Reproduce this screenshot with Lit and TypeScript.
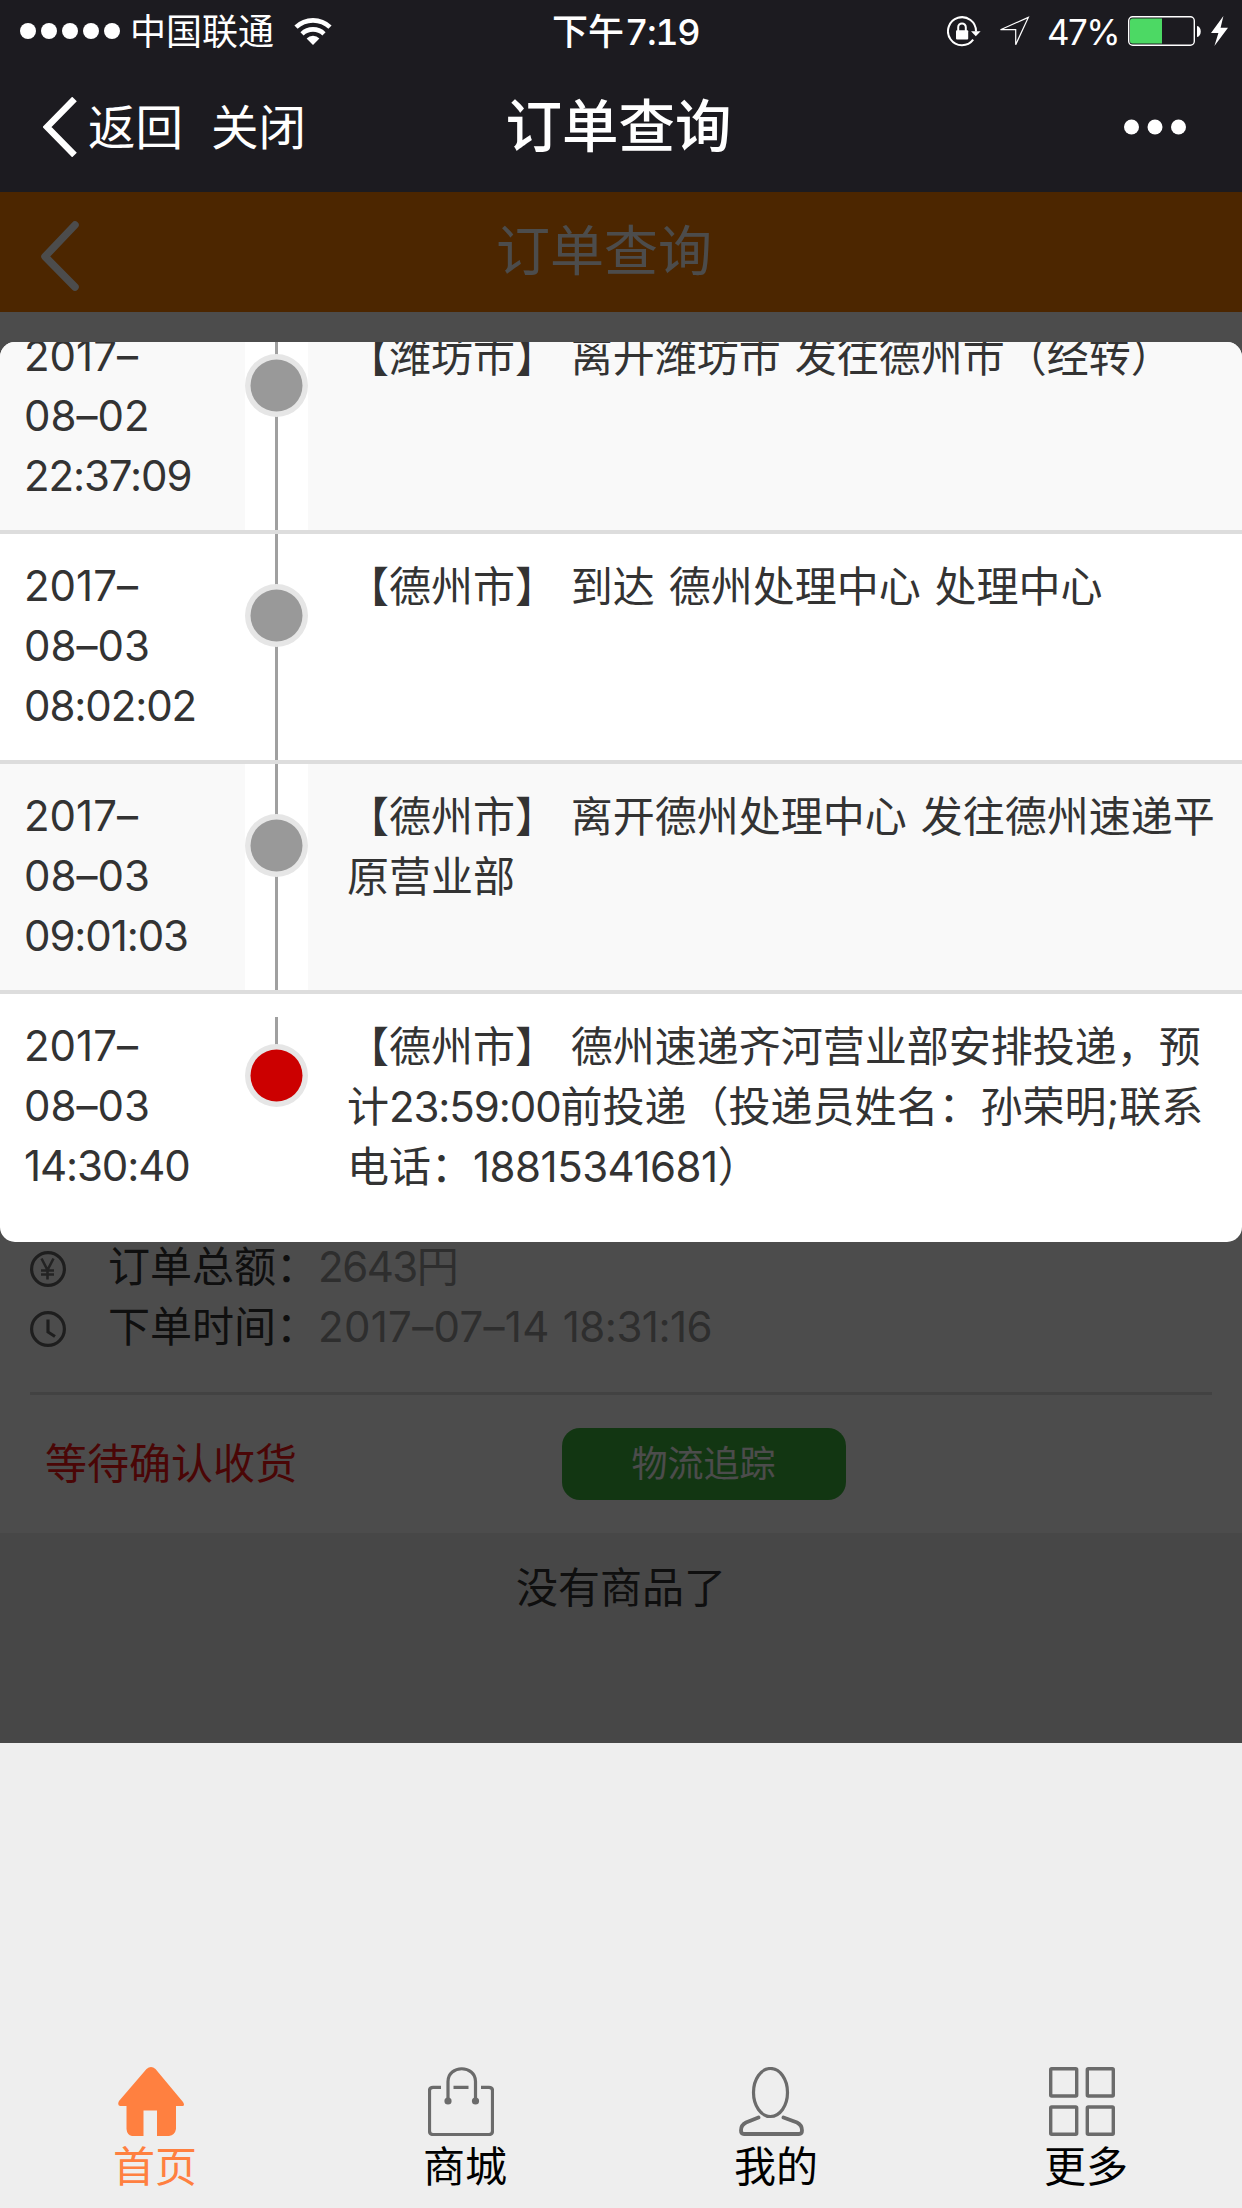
import { LitElement, html, svg, css } from "lit";
import { customElement, property } from "lit/decorators.js";
import { classMap } from "lit/directives/class-map.js";

interface TrackEvent {
  day: string[];
  lines: string[];
}

const EVENTS: TrackEvent[] = [
  { day: ["2017–", "08–02", "22:37:09"], lines: ["【潍坊市】 离开潍坊市 发往德州市（经转）"] },
  { day: ["2017–", "08–03", "08:02:02"], lines: ["【德州市】 到达 德州处理中心 处理中心"] },
  { day: ["2017–", "08–03", "09:01:03"], lines: ["【德州市】 离开德州处理中心 发往德州速递平", "原营业部"] },
  {
    day: ["2017–", "08–03", "14:30:40"],
    lines: ["【德州市】 德州速递齐河营业部安排投递，预", "计23:59:00前投递（投递员姓名：孙荣明;联系", "电话：18815341681）"],
  },
];

@customElement("status-bar")
export class StatusBar extends LitElement {
  static styles = css`
    :host { display: grid; grid-template-columns: 552px 1fr auto; height: 60px; align-items: center; color: #fff; font-size: 36px; line-height: 60px; white-space: nowrap; }
    .left, .right { display: flex; align-items: center; }
    .left { padding-left: 20px; }
    .dots { width: 100px; height: 16px; display: block; }
    .carrier { margin-left: 10px; padding-top: 2px; }
    .wifi { display: block; margin-left: 20px; }
    .time { font-weight: 500; padding-top: 1px; }
    .digits { font-variant-numeric: tabular-nums; margin-left: 1px; letter-spacing: -1.4px; }
    .right { padding-right: 14px; }
    .pct { margin-left: 17px; width: 81px; font-size: 35px; letter-spacing: -1.6px; padding-top: 1px; }
    svg { display: block; flex: none; }
    .arrow { margin-left: 18px; }
    .bolt { margin-left: 9px; }
  `;
  render() {
    return html`
      <div class="left">
        <svg class="dots" viewBox="0 0 100 16" fill="#fff">${[8, 29, 50, 71, 92].map((x) => svg`<circle cx=${x} cy="8" r="8"></circle>`)}</svg>
        <span class="carrier">中国联通</span>
        <svg class="wifi" width="38" height="28" viewBox="0 0 38 28" fill="none" stroke="#fff" stroke-width="4.6">
          <path d="M2 10.2a24.5 24.5 0 0 1 34 0"></path>
          <path d="M8 16.8a16 16 0 0 1 22 0"></path>
          <path d="M19 28l-6.4-6.5a9 9 0 0 1 12.8 0z" fill="#fff" stroke="none"></path>
        </svg>
      </div>
      <span class="time">下午<span class="digits">7:19</span></span>
      <div class="right">
        <svg width="34" height="31" viewBox="0 0 34 31" fill="none" stroke="#fff" stroke-width="2">
          <path d="M26.2 23.6A14 14 0 1 1 29 15.5"></path>
          <path d="M24 15.2h9.6l-4.8 5z" fill="#fff" stroke="none"></path>
          <path d="M11.2 15v-3.8a3.8 3.8 0 0 1 7.6 0V15"></path>
          <rect x="9" y="14.2" width="12.2" height="9.2" rx="1" fill="#fff" stroke="none"></rect>
        </svg>
        <svg class="arrow" width="31" height="31" viewBox="0 0 31 31" fill="none" stroke="#fff" stroke-width="1.2">
          <path d="M29.3 1.4L1.5 13.7h15.2v15z"></path>
        </svg>
        <span class="pct">47%</span>
        <svg width="74" height="30" viewBox="0 0 74 30">
          <rect x="0.7" y="0.7" width="65.6" height="28.6" rx="4" fill="none" stroke="#fff" stroke-width="1.4"></rect>
          <path d="M34 2.4v25.2H4.5a2.5 2.5 0 0 1-2.5-2.5V4.9A2.5 2.5 0 0 1 4.5 2.4z" fill="#4cd964"></path>
          <path d="M69 10c5 .6 5 10.4 0 11z" fill="#fff"></path>
        </svg>
        <svg class="bolt" width="17" height="30" viewBox="0 0 17 30" fill="#fff"><path d="M12.4 0L0 17h7.4L3.4 30 17 11.8H9.6z"></path></svg>
      </div>
    `;
  }
}

@customElement("nav-bar")
export class NavBar extends LitElement {
  static styles = css`
    :host { display: grid; grid-template-columns: 1fr auto 1fr; height: 132px; box-sizing: border-box; padding-bottom: 2px; align-items: center; color: #fff; font-size: 47.5px; line-height: 130px; white-space: nowrap; }
    .left { display: flex; align-items: center; padding-left: 43px; gap: 28px; }
    .back { display: flex; align-items: center; gap: 11px; }
    .label { padding-top: 3px; }
    .title { font-size: 56.5px; font-weight: 500; padding-right: 5px; }
    .right { display: flex; justify-content: flex-end; padding-right: 56px; }
    svg { display: block; }
  `;
  render() {
    return html`
      <div class="left">
        <span class="back">
          <svg width="34" height="60" viewBox="0 0 34 60" fill="none" stroke="#fff" stroke-width="6.5"><path d="M31.5 2L4 30l27.5 28"></path></svg>
          <span class="label">返回</span>
        </span>
        <span class="label">关闭</span>
      </div>
      <span class="title">订单查询</span>
      <div class="right">
        <svg width="62" height="16" viewBox="0 0 62 16" fill="#fff">${[7.5, 31, 54.5].map((x) => svg`<circle cx=${x} cy="8" r="7.5"></circle>`)}</svg>
      </div>
    `;
  }
}

@customElement("track-row")
export class TrackRow extends LitElement {
  @property({ attribute: false }) event!: TrackEvent;
  @property({ type: Boolean }) shaded = false;
  @property({ type: Boolean }) latest = false;

  static styles = css`
    :host { display: block; border-bottom: 4px solid #ddd; }
    :host([latest]) { border-bottom: 0; }
    .row { display: grid; grid-template-columns: 245px 63px 1fr; height: 226px; background: #fff; }
    .shaded { background: #f9f9f9; }
    .when { padding: 22px 0 0 24px; }
    .text { padding: 23px 0 0 39px; word-spacing: 2px; }
    .line { display: block; white-space: nowrap; }
    .clock { letter-spacing: -1.1px; }
    .phone { letter-spacing: -0.5px; }
    .rail { background: #fff; }
    svg { display: block; }
  `;

  /* Digit runs are set slightly tighter than the text around them. */
  private tighten(line: string) {
    return line
      .split(/(\d[\d:]{6,})/)
      .map((part) =>
        /^\d[\d:]{6,}$/.test(part)
          ? html`<span class=${part.includes(":") ? "clock" : "phone"}>${part}</span>`
          : part
      );
  }

  render() {
    return html`
      <div class=${classMap({ row: true, shaded: this.shaded })}>
        <div class="when">${this.event.day.map((d) => html`<span class="line">${this.tighten(d)}</span>`)}</div>
        <div class="rail">
          <svg width="63" height="226" viewBox="0 0 63 226">
            <path d=${this.latest ? "M31.5 23V60" : "M31.5 0V226"} stroke="#a0a0a0" stroke-width="3"></path>
            <circle cx="31.5" cy="81.5" r="31.5" fill="#e6e6e6"></circle>
            <circle cx="31.5" cy="81.5" r="26" fill=${this.latest ? "#c00" : "#999"}></circle>
          </svg>
        </div>
        <div class="text">${this.event.lines.map((l) => html`<span class="line">${this.tighten(l)}</span>`)}</div>
      </div>
    `;
  }
}

@customElement("order-page")
export class OrderPage extends LitElement {
  static styles = css`
    :host { display: block; position: relative; height: 1551px; background: #eee; color: #333; overflow: hidden; }
    .header { display: flex; align-items: center; height: 120px; padding-left: 39px; background: #ff8000; color: #fff; font-size: 54px; line-height: 120px; }
    .header svg { margin-top: 8px; }
    .heading { margin-left: 417px; }
    .card { display: flex; flex-direction: column; justify-content: flex-end; height: 1221px; background: #fff; }
    .facts { margin: 0 30px; padding-bottom: 35px; border-bottom: 3px solid #ddd; }
    .fact { display: flex; align-items: center; height: 60px; line-height: 60px; }
    .fact svg { margin-top: 4px; margin-right: 42px; }
    .value { color: #999; letter-spacing: 0.3px; word-spacing: 1px; }
    .clock { letter-spacing: -0.5px; }
    .amount { letter-spacing: -1.5px; }
    .actions { display: flex; align-items: center; height: 138px; padding-left: 45px; }
    .state { width: 517px; color: #f81414; }
    .track { width: 284px; height: 72px; border-radius: 18px; background: #3fb43f; color: #fff; font-size: 36px; line-height: 72px; text-align: center; text-indent: -1px; }
    .empty { height: 210px; padding-top: 25px; text-align: center; line-height: 60px; }
    .mask { position: absolute; inset: 0; background: rgba(0, 0, 0, 0.7); }
    .modal { position: absolute; left: 0; right: 0; top: 150px; height: 900px; border-radius: 15px; background: #fff; overflow: hidden; }
    .list { margin-top: -38px; }
    svg { display: block; flex: none; }
  `;
  render() {
    return html`
      <div class="header">
        <svg width="40" height="70" viewBox="0 0 40 70" fill="none" stroke="#fff" stroke-width="7.5" stroke-linecap="round" stroke-linejoin="round"><path d="M36 4L6 35.5 36 66"></path></svg>
        <span class="heading">订单查询</span>
      </div>
      <div class="card">
        <div class="facts">
          <div class="fact">
            <svg width="36" height="36" viewBox="0 0 36 36" fill="none" stroke="#666" stroke-width="3.2">
              <circle cx="18" cy="18" r="16.4"></circle>
              <path d="M11.5 7.5L17.5 19 23.5 7.5M17.5 19V28.5M11 19.5H24M11 23.5H24" stroke-width="2.6" stroke="#777"></path>
            </svg>
            <span>订单总额：</span><span class="value amount">2643円</span>
          </div>
          <div class="fact">
            <svg width="36" height="36" viewBox="0 0 36 36" fill="none" stroke="#666" stroke-width="3.2">
              <circle cx="18" cy="18" r="16.4"></circle>
              <path d="M18 8.5V21L25 25.5"></path>
            </svg>
            <span>下单时间：</span><span class="value">2017–07–14 <span class="clock">18:31:16</span></span>
          </div>
        </div>
        <div class="actions">
          <span class="state">等待确认收货</span>
          <div class="track">物流追踪</div>
        </div>
      </div>
      <div class="empty">没有商品了</div>
      <div class="mask"></div>
      <div class="modal">
        <div class="list">
          ${EVENTS.map((e, i) => html`<track-row .event=${e} ?shaded=${i % 2 === 0} ?latest=${i === EVENTS.length - 1}></track-row>`)}
        </div>
      </div>
    `;
  }
}

@customElement("tab-bar")
export class TabBar extends LitElement {
  static styles = css`
    :host { display: grid; grid-template-columns: 310px 310px 312px 308px; height: 141px; }
    .tab { display: flex; flex-direction: column; align-items: center; color: #000; line-height: 62px; }
    .active { color: #ff8040; }
    .tab svg { display: block; margin-right: 8px; }
  `;
  private icons = [
    svg`<path fill="#ff8040" stroke="none" d="M28.5 2Q33 -2 37.5 2L65 35Q67 38 65 39H58V62Q57 68 51 69H39V43.5H25.5V69H14Q9 68 8.5 62V39H2Q-1 38 1 34Z"></path>`,
    svg`<path d="M13 20.3H5Q1.5 20.3 1.5 23.5V64Q1.5 67.5 5 67.5H61Q64.5 67.5 64.5 64V23.5Q64.5 20.3 61 20.3H53M25.5 20.3H40.5"></path>
        <path d="M20 34V14.5C20 -2.5 47.5 -2.5 47.5 14.5V34"></path>
        <circle cx="20" cy="34" r="3.6" fill="#6b6b6b" stroke="none"></circle><circle cx="47.5" cy="34" r="3.6" fill="#6b6b6b" stroke="none"></circle>`,
    svg`<ellipse cx="31.5" cy="25.5" rx="17" ry="24"></ellipse>
        <path stroke-width="3.8" stroke-linecap="round" d="M19.5 50.5L7 55.5Q2 58 2 63.5Q2 67 5 67H60Q63 67 63 63.5Q63 58 58 55.5L44.5 50.5"></path>`,
    svg`<g stroke-width="3.4"><rect x="1.7" y="1.7" width="26" height="27.3" rx="1"></rect><rect x="38.3" y="1.7" width="26" height="27.3" rx="1"></rect>
        <rect x="1.7" y="40" width="26" height="27.3" rx="1"></rect><rect x="38.3" y="40" width="26" height="27.3" rx="1"></rect></g>`,
  ];
  render() {
    return html`${["首页", "商城", "我的", "更多"].map(
      (t, i) => html`<div class=${classMap({ tab: true, active: i === 0 })}>
        <svg width="66" height="69" viewBox="0 0 66 69" fill="none" stroke="#6b6b6b" stroke-width="3.2">${this.icons[i]}</svg>
        <span>${t}</span>
      </div>`
    )}`;
  }
}

@customElement("app-root")
export class AppRoot extends LitElement {
  static styles = css`
    :host { display: block; font-family: Inter, "Noto Sans CJK SC", sans-serif; font-size: 42px; font-weight: 380; line-height: 60px; font-feature-settings: "calt" 0; }
    .screen { display: flex; flex-direction: column; width: 1242px; height: 2208px; background: #eee; overflow: hidden; }
    .top { background: #1c1b20; }
    .tabs { margin-top: auto; }
  `;
  render() {
    return html`
      <div class="screen">
        <div class="top"><status-bar></status-bar><nav-bar></nav-bar></div>
        <order-page></order-page>
        <tab-bar class="tabs"></tab-bar>
      </div>
    `;
  }
}
